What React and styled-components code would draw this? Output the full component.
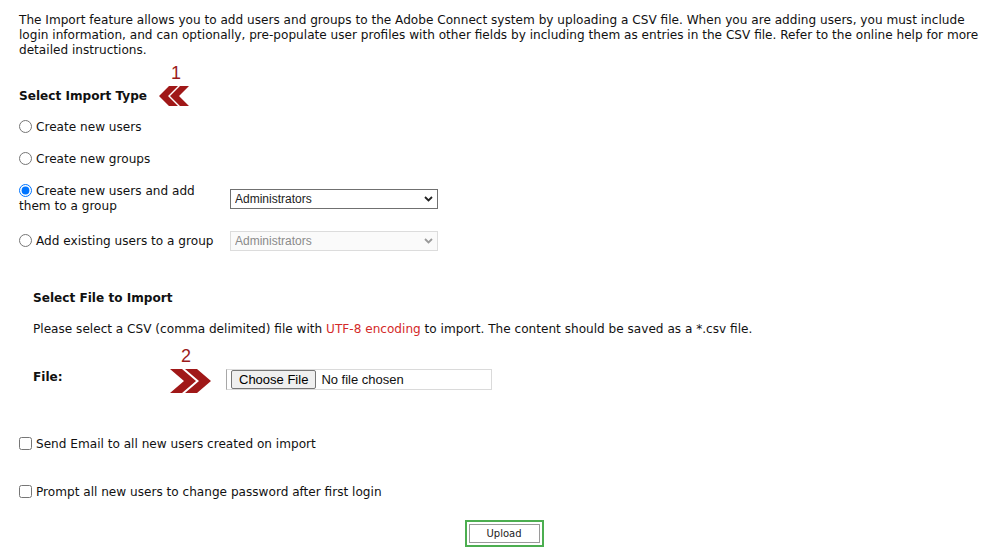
import React from 'react';
import styled, { createGlobalStyle } from 'styled-components';

const GlobalStyle = createGlobalStyle`
  body {
    margin: 0;
    background: #fff;
    color: #111;
    font-family: Verdana, "DejaVu Sans", sans-serif;
    font-size: 12.1px;
  }
`

const Page = styled.div`
  padding: 13px 0 6px 19px;
  line-height: 15px;
`

const Intro = styled.p`
  margin: 0;
`

const HeadingRow = styled.div`
  display: flex;
  align-items: center;
  gap: 12px;
  height: 20px;
  margin-top: ${p => p.$top || 0}px;
`

const Heading = styled.h3`
  margin: 0;
  font-size: 12.1px;
  font-weight: bold;
`

const Marker = styled.div`
  position: relative;
  display: flex;
`

const MarkerNumber = styled.span`
  position: absolute;
  left: ${p => p.$left}px;
  top: ${p => p.$top}px;
  font-family: "Liberation Sans", Arial, sans-serif;
  font-size: 18px;
  line-height: 18px;
  color: #9b1b1b;
`

const TypeGrid = styled.div`
  display: grid;
  grid-template-columns: 211px 208px;
  row-gap: 17px;
  align-items: center;
  margin-top: 14px;
`

const Choice = styled.label`
  display: block;
  line-height: 15px;
`

const Radio = styled.input`
  margin: 0 4px 0 0;
  width: 13px;
  height: 13px;
  vertical-align: -2px;
`

const SelectWrap = styled.div`
  position: relative;
  height: 20px;
`

const Select = styled.select`
  appearance: none;
  width: 208px;
  height: 20px;
  margin: 0;
  padding: 0 0 0 4px;
  border: 1px solid ${p => (p.disabled ? '#dcdcdc' : '#707070')};
  border-radius: 0;
  background: ${p => (p.disabled ? '#fafafa' : '#fff')};
  color: ${p => (p.disabled ? '#8a8a8a' : '#222')};
  font-family: "Liberation Sans", Arial, sans-serif;
  font-size: 12px;
  opacity: 1;
`

const Caret = styled.svg`
  position: absolute;
  right: 5px;
  top: 7px;
  pointer-events: none;
`

const FileSection = styled.section`
  padding-left: 14px;
`

const Note = styled.p`
  margin: 14px 0 0;
`

const Red = styled.span`
  color: #d42a2a;
`

const FileRow = styled.div`
  display: flex;
  align-items: center;
  height: 24px;
  margin-top: 32px;
`

const FileLabel = styled.span`
  width: 137px;
  padding-bottom: 8px;
  font-weight: bold;
`

const FileBox = styled.div`
  display: flex;
  align-items: center;
  gap: 5px;
  width: 260px;
  height: 19px;
  margin: 0 0 4px 14px;
  padding-left: 4px;
  border: 1px solid #dadada;
  border-left-color: #a8a8a8;
  font-family: "Liberation Sans", Arial, sans-serif;
  font-size: 13px;
`

const ChooseButton = styled.button`
  height: 19px;
  padding: 0 7px;
  border: 1px solid #767676;
  border-radius: 2px;
  background: #efefef;
  color: #000;
  font-family: inherit;
  font-size: 13px;
  line-height: 15px;
`

const CheckRow = styled.label`
  display: block;
  margin-top: ${p => p.$top}px;
`

const Check = styled.input`
  margin: 0 4px 0 0;
  width: 13px;
  height: 13px;
  vertical-align: -2px;
`

const Actions = styled.div`
  display: flex;
  justify-content: center;
  margin-top: 20px;
`

const UploadFrame = styled.div`
  padding: 2px;
  border: 2px solid #4cae50;
`

const UploadButton = styled.button`
  width: 71px;
  height: 19px;
  border: 1px solid #9a9a9a;
  background: #fff;
  color: #222;
  font-family: Verdana, "DejaVu Sans", sans-serif;
  font-size: 10px;
`

const LeftChevrons = () => (
  <svg width="30" height="20" viewBox="0 0 30 20">
    <polygon points="10,0 19,0 9,10 19,20 10,20 0,10" fill="#a01818" />
    <polygon points="21,0 30,0 20,10 30,20 21,20 11,10" fill="#a01818" />
  </svg>
)

const RightChevrons = () => (
  <svg width="42" height="24" viewBox="0 0 42 24">
    <polygon points="0,0 12,0 26,12 12,24 0,24 14,12" fill="#a01818" />
    <polygon points="15,0 27,0 41,12 27,24 15,24 29,12" fill="#a01818" />
  </svg>
)

const GroupSelect = ({ disabled }) => (
  <SelectWrap>
    <Select disabled={disabled} defaultValue="Administrators">
      <option>Administrators</option>
      <option>Authors</option>
      <option>Meeting Hosts</option>
    </Select>
    <Caret width="9" height="6" viewBox="0 0 9 6">
      <path d="M1 1 L4.5 4.5 L8 1" fill="none" stroke={disabled ? '#9a9a9a' : '#222'} strokeWidth="1.8" />
    </Caret>
  </SelectWrap>
)

export default function App() {
  return (
    <Page>
      <GlobalStyle />
      <Intro>
        The Import feature allows you to add users and groups to the Adobe Connect system by uploading a CSV file. When you are adding users, you must include login information, and can optionally, pre-populate user profiles with other fields by including them as entries in the CSV file. Refer to the online help for more detailed instructions.
      </Intro>

      <HeadingRow $top={28}>
        <Heading>Select Import Type</Heading>
        <Marker>
          <MarkerNumber $left={12} $top={-22}>1</MarkerNumber>
          <LeftChevrons />
        </Marker>
      </HeadingRow>

      <TypeGrid>
        <Choice><Radio type="radio" name="type" />Create new users</Choice>
        <span />
        <Choice><Radio type="radio" name="type" />Create new groups</Choice>
        <span />
        <Choice><Radio type="radio" name="type" defaultChecked />Create new users and add them to a group</Choice>
        <GroupSelect />
        <Choice><Radio type="radio" name="type" />Add existing users to a group</Choice>
        <GroupSelect disabled />
      </TypeGrid>

      <FileSection>
        <HeadingRow $top={37}>
          <Heading>Select File to Import</Heading>
        </HeadingRow>
        <Note>
          Please select a CSV (comma delimited) file with <Red>UTF-8 encoding</Red> to import. The content should be saved as a *.csv file.
        </Note>
        <FileRow>
          <FileLabel>File:</FileLabel>
          <Marker>
            <MarkerNumber $left={11} $top={-22}>2</MarkerNumber>
            <RightChevrons />
          </Marker>
          <FileBox>
            <ChooseButton type="button">Choose File</ChooseButton>
            <span>No file chosen</span>
          </FileBox>
        </FileRow>
      </FileSection>

      <CheckRow $top={44}><Check type="checkbox" />Send Email to all new users created on import</CheckRow>
      <CheckRow $top={33}><Check type="checkbox" />Prompt all new users to change password after first login</CheckRow>

      <Actions>
        <UploadFrame>
          <UploadButton type="button">Upload</UploadButton>
        </UploadFrame>
      </Actions>
    </Page>
  )
}
